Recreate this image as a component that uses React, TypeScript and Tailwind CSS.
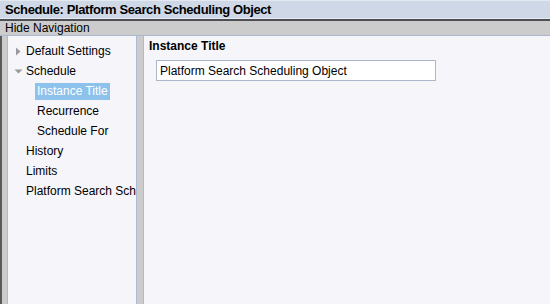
import { useState } from 'react'

const FONT = "font-['Liberation_Sans','Arial',sans-serif]"

type NavItem = { label: string; depth: 0 | 1; arrow?: 'right' | 'down' }

const NAV: NavItem[] = [
  { label: 'Default Settings', depth: 0, arrow: 'right' },
  { label: 'Schedule', depth: 0, arrow: 'down' },
  { label: 'Instance Title', depth: 1 },
  { label: 'Recurrence', depth: 1 },
  { label: 'Schedule For', depth: 1 },
  { label: 'History', depth: 0 },
  { label: 'Limits', depth: 0 },
  { label: 'Platform Search Scheduling Object', depth: 0 },
]

function Arrow({ dir }: { dir: 'right' | 'down' }) {
  return (
    <svg width="9" height="9" viewBox="0 0 9 9" className="shrink-0">
      {dir === 'right' ? (
        <path d="M2 0.5 L6.5 4.5 L2 8.5 Z" fill="#9a9a9a" />
      ) : (
        <path d="M0.5 2.5 L8.5 2.5 L4.5 6.5 Z" fill="#9a9a9a" />
      )}
    </svg>
  )
}

export default function App() {
  const [selected, setSelected] = useState('Instance Title')

  return (
    <div className={`w-[550px] h-[304px] overflow-hidden flex flex-col bg-[#cccccc] text-black ${FONT}`}>
      {/* Title bar */}
      <div className="h-[19px] shrink-0 flex items-center px-[5px] bg-[#cfd8e6] border-t border-[#e4e9f1] border-b border-b-[#e6ebf2]">
        <span className="text-[13px] font-bold leading-none tracking-[-0.4px]">Schedule: Platform Search Scheduling Object</span>
      </div>
      <div className="h-[2px] shrink-0 bg-[#4d4f55]" />

      {/* Hide navigation bar */}
      <div className="h-[15px] shrink-0 flex items-center px-[5px] bg-[#cccccc] border-b border-[#a8b8cf]">
        <span className="text-[12px] leading-none">Hide Navigation</span>
      </div>

      <div className="flex-1 flex min-h-0">
        {/* left edge */}
        <div className="w-[2px] shrink-0 bg-[#5a5a5a]" />
        <div className="w-[5px] shrink-0 bg-[#cccccc]" />

        {/* Navigation */}
        <div className="w-[130px] shrink-0 bg-[#f5f5fa] border-x border-[#a9bad2] overflow-hidden pt-[5px]">
          {NAV.map((item) => {
            const active = item.label === selected
            return (
              <div
                key={item.label}
                onClick={() => setSelected(item.label)}
                className={`h-[20px] flex items-center whitespace-nowrap text-[12px] ${item.depth === 0 ? 'pl-[6px]' : 'pl-[27px]'}`}
              >
                {item.depth === 0 && (
                  <span className="w-[10px] shrink-0 flex">{item.arrow && <Arrow dir={item.arrow} />}</span>
                )}
                <span className={`shrink-0 px-[2px] leading-[17px] ${active ? 'bg-[#8cc2ec] text-white' : ''}`}>{item.label}</span>
              </div>
            )
          })}
        </div>

        <div className="w-[6px] shrink-0 bg-[#cccccc]" />

        {/* Content */}
        <div className="flex-1 bg-[#f5f5fa] border-l border-[#a9bad2] pl-[5px] pt-[2px]">
          <div className="text-[12px] font-bold leading-[16px]">Instance Title</div>
          <div className="mt-[6px] ml-[7px] w-[280px] h-[21px] bg-white border border-[#aab6cb] flex items-center px-[3px]">
            <span className="text-[12px] leading-none">Platform Search Scheduling Object</span>
          </div>
        </div>
      </div>
    </div>
  )
}
